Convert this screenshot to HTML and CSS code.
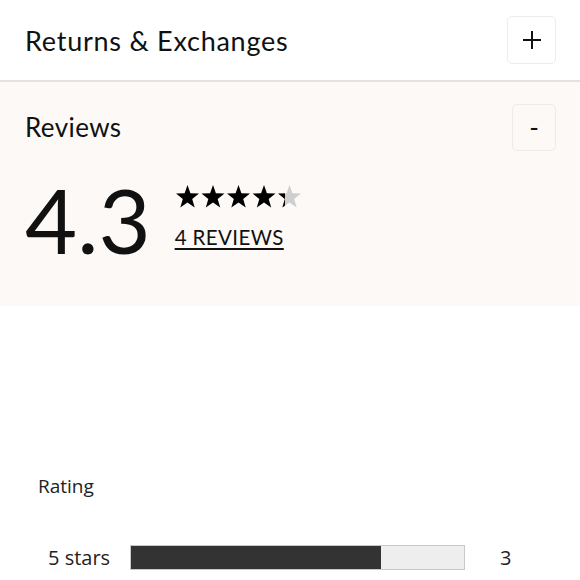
FILE: index.html
```html
<!DOCTYPE html>
<html>
<head>
<meta charset="utf-8">
<link rel="stylesheet" href="styles.css">
</head>
<body>
<section class="acc">
  <div class="acc-head">
    <h2 class="acc-title">Returns &amp; Exchanges</h2>
    <button class="toggle plus" aria-label="expand">
      <svg width="20" height="20" viewBox="0 0 20 20"><path d="M10 1v18M1 10h18" stroke="#111" stroke-width="2" fill="none"/></svg>
    </button>
  </div>
</section>
<section class="reviews">
  <div class="acc-head rev-head">
    <h2 class="acc-title">Reviews</h2>
    <button class="toggle minus" aria-label="collapse">-</button>
  </div>
  <div class="summary">
    <div class="score">4.3</div>
    <div class="meta">
      <svg class="stars" width="128" height="26" viewBox="0 0 128 26">
        <defs>
          <linearGradient id="part" x1="0" x2="1" y1="0" y2="0">
            <stop offset="0.32" stop-color="#000"/>
            <stop offset="0.32" stop-color="#cfcfcf"/>
          </linearGradient>
          <polygon id="st" points="12.5,1 15.4,9.3 24,9.5 17.2,15 19.7,23.5 12.5,18.5 5.3,23.5 7.8,15 1,9.5 9.6,9.3"/>
        </defs>
        <use href="#st" x="0" fill="#000"/>
        <use href="#st" x="25.5" fill="#000"/>
        <use href="#st" x="51" fill="#000"/>
        <use href="#st" x="76.5" fill="#000"/>
        <use href="#st" x="102" fill="url(#part)"/>
      </svg>
      <a class="count" href="#">4 REVIEWS</a>
    </div>
  </div>
</section>
<section class="breakdown">
  <div class="rating-label">Rating</div>
  <div class="row">
    <span class="row-label">5 stars</span>
    <div class="bar"><div class="fill" style="width:75%"></div></div>
    <span class="row-count">3</span>
  </div>
</section>
</body>
</html>
```
FILE: styles.css
```css
html, body {
  margin: 0;
  padding: 0;
  background: #fff;
  color: #111;
  font-family: "Lato", "Open Sans", sans-serif;
}
.acc {
  border-bottom: 2px solid #e4e2e0;
}
.acc-head {
  display: flex;
  align-items: center;
  justify-content: space-between;
  padding: 0 24px 0 25px;
  height: 80px;
  box-sizing: border-box;
}
.acc-title {
  margin: 0;
  font-weight: 400;
  font-size: 27px;
  letter-spacing: 0.75px;
}
.toggle {
  display: flex;
  align-items: center;
  justify-content: center;
  background: transparent;
  border: 1px solid #ececec;
  border-radius: 5px;
  padding: 0;
  color: #111;
  font-family: "Lato", sans-serif;
}
.plus {
  width: 49px;
  height: 48px;
}
.minus {
  width: 44px;
  height: 47px;
  font-size: 26px;
  line-height: 1;
}
.reviews {
  background: #fcf9f6;
  height: 224px;
}
.rev-head {
  height: 92px;
  padding-bottom: 2px;
}
.rev-head .acc-title {
  font-size: 26px;
  letter-spacing: 0.4px;
}
.summary {
  display: flex;
  align-items: flex-start;
  padding-left: 25px;
  gap: 24px;
}
.score {
  font-size: 90px;
  line-height: 90px;
  font-weight: 400;
}
.meta {
  display: flex;
  flex-direction: column;
  gap: 15px;
  padding-top: 10px;
}
.stars {
  display: block;
}
.count {
  color: #111;
  font-size: 20.5px;
  letter-spacing: 0.4px;
  text-decoration: underline;
  text-underline-offset: 3px;
}
.breakdown {
  padding: 167px 0 0 38px;
  font-family: "Open Sans", sans-serif;
  color: #222;
}
.rating-label {
  font-size: 19px;
}
.row {
  display: flex;
  align-items: center;
  margin-top: 45px;
  padding-left: 10px;
  font-size: 20px;
}
.row-label {
  width: 82px;
}
.bar {
  width: 333px;
  height: 23px;
  border: 1px solid #c8c8c8;
  background: #eeeeee;
}
.fill {
  height: 100%;
  background: #333;
}
.row-count {
  margin-left: 35px;
}
```
